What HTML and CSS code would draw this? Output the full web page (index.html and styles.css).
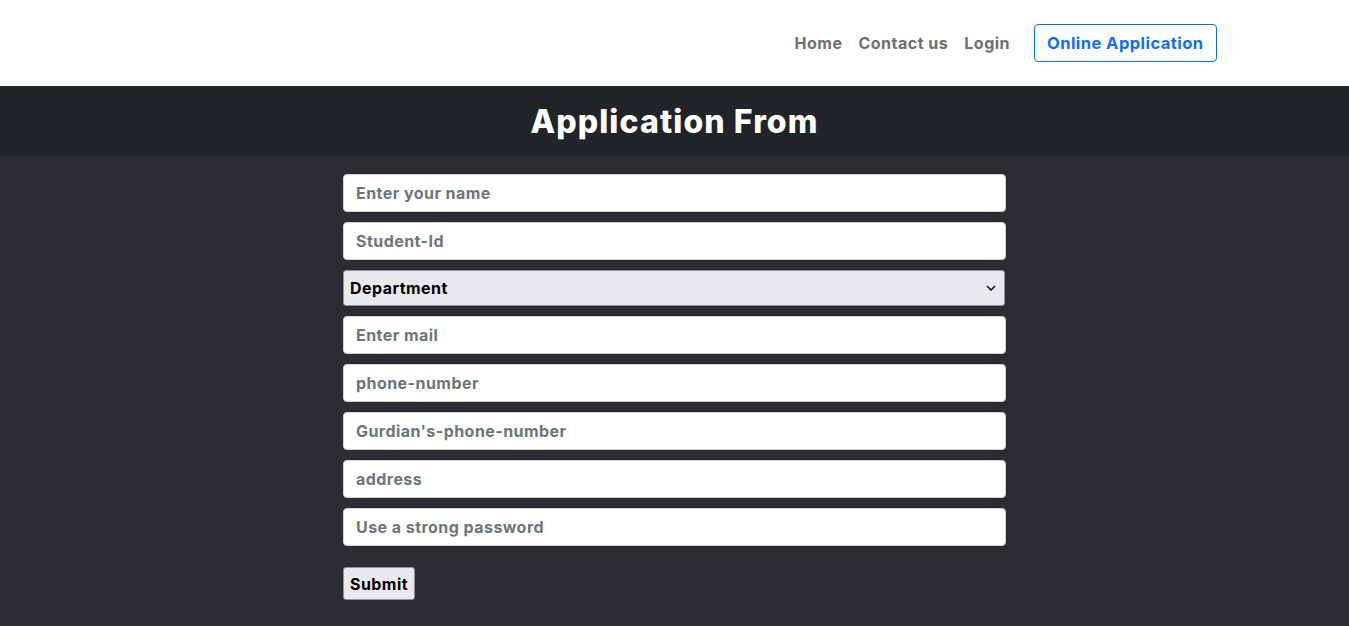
FILE: index.html
```html
<!DOCTYPE html>
<html lang="en">
<head>
<meta charset="utf-8">
<title>Application Form</title>
<link rel="stylesheet" href="styles.css">
</head>
<body>
<header class="topbar">
  <nav class="nav-inner">
    <a class="nav-link" href="#">Home</a>
    <a class="nav-link" href="#">Contact us</a>
    <a class="nav-link" href="#">Login</a>
    <a class="nav-btn" href="#">Online Application</a>
  </nav>
</header>
<main class="page">
  <div class="title-band">
    <h2 class="title">Application From</h2>
  </div>
  <form class="app-form">
    <input class="field" type="text" placeholder="Enter your name">
    <input class="field" type="text" placeholder="Student-Id">
    <select class="select">
      <option>Department</option>
    </select>
    <input class="field" type="email" placeholder="Enter mail">
    <input class="field" type="text" placeholder="phone-number">
    <input class="field" type="text" placeholder="Gurdian's-phone-number">
    <input class="field" type="text" placeholder="address">
    <input class="field" type="password" placeholder="Use a strong password">
    <div class="actions">
      <button class="submit" type="submit">Submit</button>
    </div>
  </form>
</main>
</body>
</html>
```
FILE: styles.css
```css
* { box-sizing: border-box; }
html, body { margin: 0; padding: 0; }
body {
  font-family: "Inter", "Liberation Sans", sans-serif;
  font-weight: 700;
  background: #2b2d32;
  min-height: 626px;
}
.topbar {
  background: #ffffff;
  height: 86px;
}
.nav-inner {
  width: 1140px;
  margin: 0 auto;
  padding: 0 28px 0 12px;
  height: 86px;
  display: flex;
  align-items: center;
  justify-content: flex-end;
}
.nav-link {
  color: #6f6f6f;
  text-decoration: none;
  font-size: 16px;
  letter-spacing: 0.5px;
  padding: 8px 8px;
}
.nav-btn {
  margin-left: 16px;
  color: #0d6efd;
  text-decoration: none;
  font-size: 16.5px;
  letter-spacing: 0.45px;
  border: 1px solid #0d6efd;
  border-radius: 4px;
  padding: 0 12px;
  height: 38px;
  display: flex;
  align-items: center;
}
.title-band {
  background: #212529;
  height: 70px;
  display: flex;
  align-items: center;
  justify-content: center;
}
.title {
  margin: 0;
  color: #ffffff;
  font-size: 32px;
  font-weight: 800;
  letter-spacing: 1.1px;
}
.app-form {
  width: 663px;
  margin: 18px auto 0;
  display: flex;
  flex-direction: column;
  gap: 10px;
  padding-bottom: 26px;
}
.field {
  height: 38px;
  border: 1px solid #ced4da;
  border-radius: 4px;
  background: #ffffff;
  padding: 0 12px;
  font-family: inherit;
  font-weight: 700;
  font-size: 16px;
  letter-spacing: 0.45px;
  color: #212529;
}
.field::placeholder { color: #6c757d; }
.select {
  appearance: none;
  -webkit-appearance: none;
  height: 36px;
  width: 662px;
  border: 1px solid #8f8f9d;
  border-radius: 3px;
  background-color: #e9e9ed;
  background-image: url("data:image/svg+xml;utf8,<svg xmlns='http://www.w3.org/2000/svg' width='10' height='6' viewBox='0 0 10 6'><path d='M1 1l4 4 4-4' fill='none' stroke='%23111' stroke-width='1.6'/></svg>");
  background-repeat: no-repeat;
  background-position: right 8px center;
  padding: 0 6px;
  font-family: inherit;
  font-weight: 700;
  font-size: 16px;
  letter-spacing: 0.45px;
  color: #000;
}
.actions {
  padding-top: 11px;
}
.submit {
  height: 33px;
  padding: 0 6px;
  border: 1px solid #8f8f9d;
  border-radius: 3px;
  background: #e9e9ed;
  font-family: inherit;
  font-weight: 700;
  font-size: 16px;
  letter-spacing: 0.45px;
  color: #000;
}
```
